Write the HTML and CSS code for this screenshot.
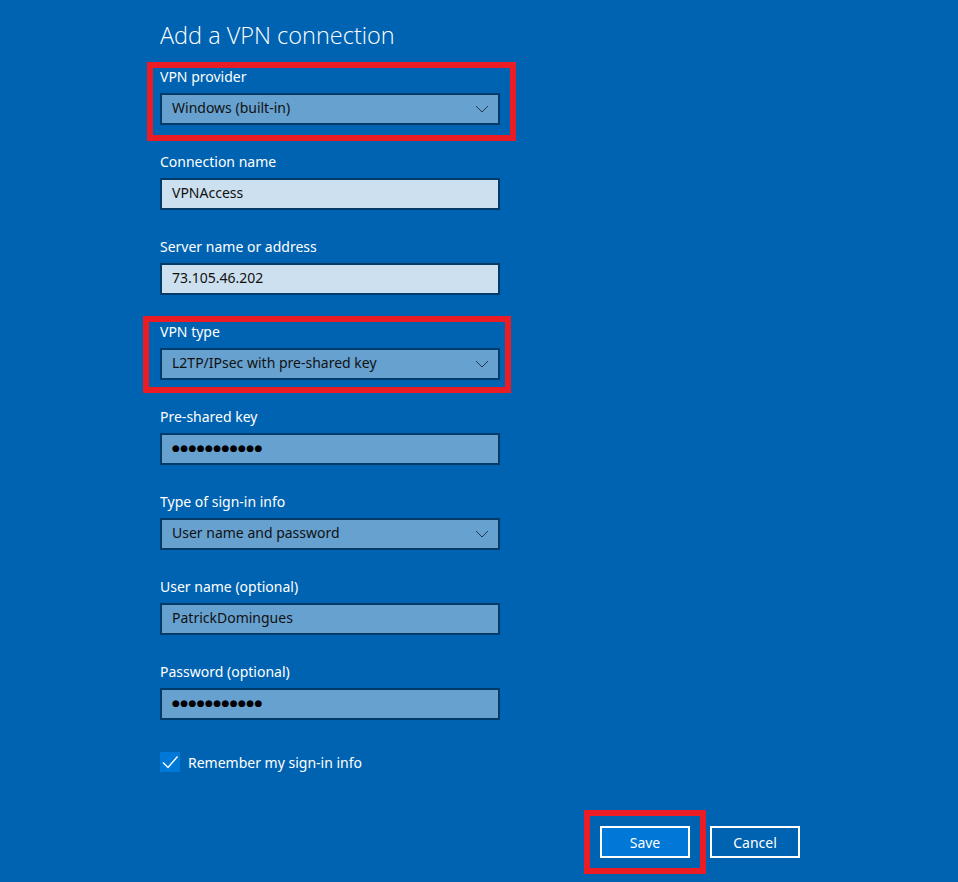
FILE: index.html
```html
<!DOCTYPE html>
<html lang="en">
<head>
    <meta charset="UTF-8">
    <meta name="viewport" content="width=device-width, initial-scale=1.0">
    <title>Add a VPN connection</title>
    <link rel="stylesheet" href="styles.css">
</head>
<body>
    <div class="vpn-page">
        <h1>Add a VPN connection</h1>

        <div class="form-group mark mark-provider">
            <label>VPN provider</label>
            <div class="field field-select">
                <span>Windows (built-in)</span>
                <svg class="chevron" width="14" height="8" viewBox="0 0 14 8"><polyline points="1,1 7,7 13,1" fill="none" stroke="#1f3550" stroke-width="1"/></svg>
            </div>
        </div>

        <div class="form-group">
            <label>Connection name</label>
            <div class="field field-text"><span>VPNAccess</span></div>
        </div>

        <div class="form-group">
            <label>Server name or address</label>
            <div class="field field-text"><span>73.105.46.202</span></div>
        </div>

        <div class="form-group mark mark-type">
            <label>VPN type</label>
            <div class="field field-select">
                <span>L2TP/IPsec with pre-shared key</span>
                <svg class="chevron" width="14" height="8" viewBox="0 0 14 8"><polyline points="1,1 7,7 13,1" fill="none" stroke="#1f3550" stroke-width="1"/></svg>
            </div>
        </div>

        <div class="form-group">
            <label>Pre-shared key</label>
            <div class="field field-select"><span class="dots">●●●●●●●●●●●</span></div>
        </div>

        <div class="form-group">
            <label>Type of sign-in info</label>
            <div class="field field-select">
                <span>User name and password</span>
                <svg class="chevron" width="14" height="8" viewBox="0 0 14 8"><polyline points="1,1 7,7 13,1" fill="none" stroke="#1f3550" stroke-width="1"/></svg>
            </div>
        </div>

        <div class="form-group">
            <label>User name (optional)</label>
            <div class="field field-select"><span>PatrickDomingues</span></div>
        </div>

        <div class="form-group">
            <label>Password (optional)</label>
            <div class="field field-select"><span class="dots">●●●●●●●●●●●</span></div>
        </div>

        <div class="remember">
            <span class="checkbox">
                <svg width="20" height="20" viewBox="0 0 20 20"><polyline points="3,10.5 8,15.5 17.5,4.5" fill="none" stroke="#fff" stroke-width="1.4"/></svg>
            </span>
            <span>Remember my sign-in info</span>
        </div>

        <div class="actions">
            <button class="btn btn-primary mark mark-save">Save</button>
            <button class="btn">Cancel</button>
        </div>
    </div>
</body>
</html>
```

FILE: styles.css
```css
body {
    margin: 0;
    min-height: 100vh;
    background: #0063b1;
    color: #fff;
    font-family: "Noto Sans", "Open Sans", sans-serif;
    font-size: 14px;
}
.vpn-page {
    padding: 19px 0 0 160px;
}
h1 {
    margin: 0 0 16px;
    font-family: "Open Sans", sans-serif;
    font-weight: 300;
    font-size: 23.5px;
    line-height: 32px;
    color: #fff;
}
.form-group {
    width: 340px;
    margin-bottom: 27px;
}
label {
    display: block;
    height: 20px;
    line-height: 20px;
    margin-bottom: 6px;
}
.field {
    box-sizing: border-box;
    display: flex;
    align-items: center;
    justify-content: space-between;
    height: 32px;
    padding: 0 9px 2px 10px;
    border: 2px solid #003b6a;
    color: #111;
}
.field span {
    line-height: 20px;
}
.field-select {
    background: #66a1d0;
}
.field-text {
    background: #cce0ef;
}
.dots {
    font-family: "DejaVu Sans", sans-serif;
    font-size: 9px;
    letter-spacing: 0.4px;
    color: #000;
}
.chevron {
    display: block;
    margin-top: 1px;
}
.remember {
    display: flex;
    align-items: center;
    gap: 8px;
    margin-top: 32px;
    height: 20px;
}
.checkbox {
    display: block;
    width: 20px;
    height: 20px;
    background: #0078d7;
}
.checkbox svg {
    display: block;
}
.actions {
    display: flex;
    justify-content: flex-end;
    gap: 20px;
    width: 640px;
    margin-top: 54px;
}
.btn {
    box-sizing: border-box;
    width: 90px;
    height: 32px;
    border: 2px solid #fff;
    background: #0063b1;
    color: #fff;
    font-family: inherit;
    font-size: 14px;
    cursor: pointer;
}
.btn-primary {
    background: #0078d7;
}

/* red highlight frames */
.mark {
    position: relative;
}
.mark::after {
    content: "";
    position: absolute;
    border: 6px solid #ec1c24;
    pointer-events: none;
}
.mark-provider::after {
    left: -13px;
    right: -16px;
    top: -5px;
    bottom: -16px;
}
.mark-type::after {
    left: -17px;
    right: -11px;
    top: -6px;
    bottom: -13px;
}
.mark-save::after {
    left: -18px;
    right: -18px;
    top: -18px;
    bottom: -18px;
}
```
